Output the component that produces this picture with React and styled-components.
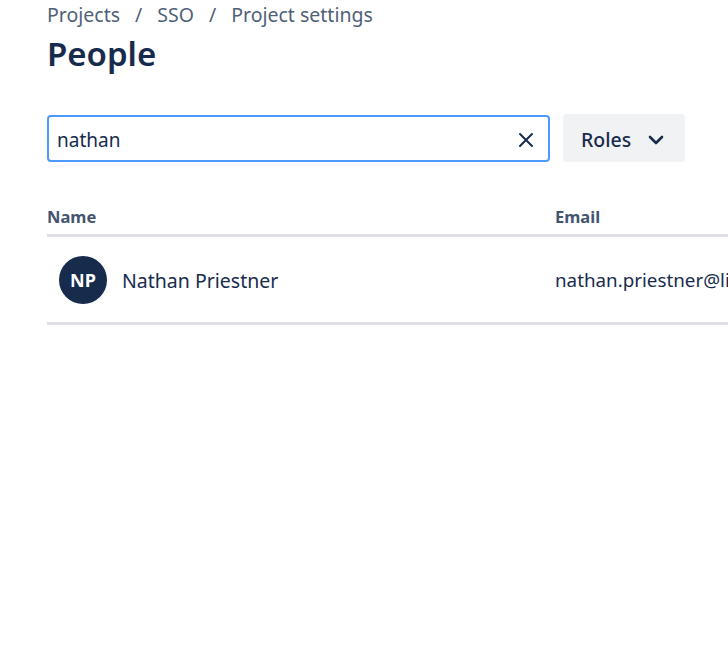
import React, { useState } from 'react'
import styled, { createGlobalStyle } from 'styled-components'

const GlobalStyle = createGlobalStyle`
  html, body {
    margin: 0;
    padding: 0;
    background: #fff;
    overflow: hidden;
  }
  body {
    font-family: "Noto Sans", "Open Sans", sans-serif;
    color: #172B4D;
  }
`

const Page = styled.div`
  padding: 0 0 0 47px;
  width: 900px;
`

const Breadcrumbs = styled.nav`
  display: flex;
  align-items: center;
  height: 28px;
  font-size: 19.5px;
  color: #505F79;
`

const Crumb = styled.span`
  white-space: nowrap;
`

const Separator = styled.span`
  padding: 0 15px;
`

const Title = styled.h1`
  margin: 4px 0 0;
  font-size: 33px;
  line-height: 44px;
  font-weight: 600;
  color: #172B4D;
`

const Filters = styled.div`
  display: flex;
  align-items: center;
  gap: 13px;
  margin-top: 38px;
`

const SearchBox = styled.div`
  display: flex;
  align-items: center;
  width: 503px;
  height: 47px;
  box-sizing: border-box;
  border: 2px solid #4C9AFF;
  border-radius: 4px;
  padding: 3px 12px 0 8px;
`

const SearchInput = styled.input`
  flex: 1;
  border: none;
  outline: none;
  font-family: inherit;
  font-size: 19px;
  color: #172B4D;
  caret-color: #172B4D;
  padding: 0;
  background: transparent;
`

const ClearButton = styled.button`
  display: flex;
  align-items: center;
  justify-content: center;
  border: none;
  background: none;
  padding: 0;
  cursor: pointer;
`

const RolesButton = styled.button`
  display: flex;
  align-items: center;
  gap: 16px;
  height: 48px;
  width: 122px;
  box-sizing: border-box;
  padding: 3px 18px 0;
  border: none;
  border-radius: 4px;
  background: #F1F2F4;
  font-family: inherit;
  font-size: 19.5px;
  font-weight: 500;
  color: #172B4D;
  cursor: pointer;
`

const Table = styled.table`
  margin-top: 43px;
  width: 853px;
  border-collapse: collapse;
`

const HeadCell = styled.th`
  text-align: left;
  font-size: 16.5px;
  font-weight: 700;
  color: #44546F;
  padding: 0 0 6px;
  border-bottom: 3px solid #DFE1E6;
  width: ${p => p.width || 'auto'};
`

const Cell = styled.td`
  padding: 19px 0 18px;
  font-size: ${p => p.size || '19.5px'};
  color: #172B4D;
  border-bottom: 3px solid #DFE1E6;
  white-space: nowrap;
`

const NameWrap = styled.div`
  display: flex;
  align-items: center;
  gap: 15px;
  padding-left: 12px;
`

const Avatar = styled.div`
  width: 48px;
  height: 48px;
  border-radius: 50%;
  background: #172B4D;
  color: #fff;
  display: flex;
  align-items: center;
  justify-content: center;
  font-size: 18px;
  font-weight: 700;
`

function CloseIcon() {
  return (
    <svg width="20" height="20" viewBox="0 0 20 20">
      <path d="M4 4 L16 16 M16 4 L4 16" stroke="#172B4D" strokeWidth="2" strokeLinecap="round" />
    </svg>
  )
}

function ChevronIcon() {
  return (
    <svg width="18" height="18" viewBox="0 0 18 18">
      <path d="M3 6 L9 12 L15 6" stroke="#172B4D" strokeWidth="2.6" fill="none" strokeLinecap="round" strokeLinejoin="round" />
    </svg>
  )
}

export default function App() {
  const [query, setQuery] = useState('nathan')

  return (
    <>
      <GlobalStyle />
      <Page>
        <Breadcrumbs>
          <Crumb>Projects</Crumb>
          <Separator>/</Separator>
          <Crumb>SSO</Crumb>
          <Separator>/</Separator>
          <Crumb>Project settings</Crumb>
        </Breadcrumbs>
        <Title>People</Title>
        <Filters>
          <SearchBox>
            <SearchInput value={query} onChange={e => setQuery(e.target.value)} autoFocus />
            <ClearButton onClick={() => setQuery('')}><CloseIcon /></ClearButton>
          </SearchBox>
          <RolesButton>Roles <ChevronIcon /></RolesButton>
        </Filters>
        <Table>
          <thead>
            <tr>
              <HeadCell width="508px">Name</HeadCell>
              <HeadCell>Email</HeadCell>
            </tr>
          </thead>
          <tbody>
            <tr>
              <Cell>
                <NameWrap>
                  <Avatar>NP</Avatar>
                  Nathan Priestner
                </NameWrap>
              </Cell>
              <Cell size="18.8px">nathan.priestner@lighthouse.com</Cell>
            </tr>
          </tbody>
        </Table>
      </Page>
    </>
  )
}
